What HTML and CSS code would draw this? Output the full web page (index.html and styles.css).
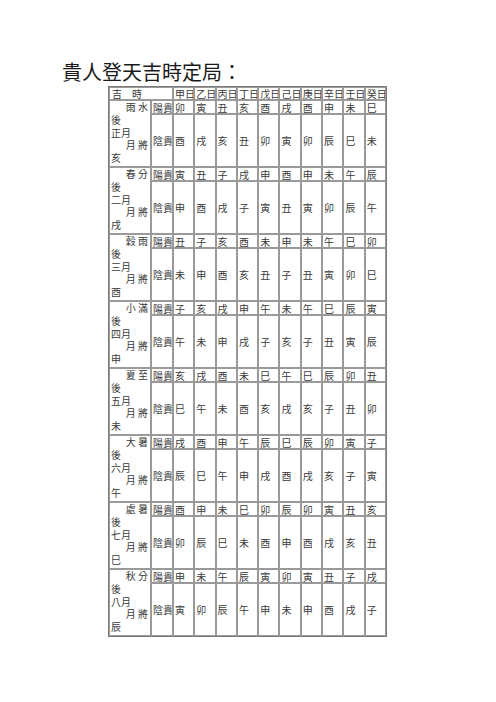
FILE: index.html
```html
<!DOCTYPE html>
<html lang="zh-Hant">
<head>
<meta charset="utf-8">
<title>貴人登天吉時定局</title>
<link rel="stylesheet" href="styles.css">
</head>
<body>
<h1 class="title">貴人登天吉時定局：</h1>
<table class="grid">
<colgroup>
<col class="c-label"><col class="c-kind">
<col class="c-day"><col class="c-day"><col class="c-day"><col class="c-day"><col class="c-day">
<col class="c-day"><col class="c-day"><col class="c-day"><col class="c-day"><col class="c-day">
</colgroup>
<tr class="head"><td colspan="2">吉　時</td><td>甲日</td><td>乙日</td><td>丙日</td><td>丁日</td><td>戊日</td><td>己日</td><td>庚日</td><td>辛日</td><td>壬日</td><td>癸日</td></tr>

<tr class="yang"><td rowspan="2" class="label"><div class="r">雨 水</div><div>後</div><div>正月</div><div class="r">月 將</div><div>亥</div></td><td>陽貴</td><td>卯</td><td>寅</td><td>丑</td><td>亥</td><td>酉</td><td>戌</td><td>酉</td><td>申</td><td>未</td><td>巳</td></tr>
<tr class="yin"><td>陰貴</td><td>酉</td><td>戌</td><td>亥</td><td>丑</td><td>卯</td><td>寅</td><td>卯</td><td>辰</td><td>巳</td><td>未</td></tr>

<tr class="yang"><td rowspan="2" class="label"><div class="r">春 分</div><div>後</div><div>二月</div><div class="r">月 將</div><div>戌</div></td><td>陽貴</td><td>寅</td><td>丑</td><td>子</td><td>戌</td><td>申</td><td>酉</td><td>申</td><td>未</td><td>午</td><td>辰</td></tr>
<tr class="yin"><td>陰貴</td><td>申</td><td>酉</td><td>戌</td><td>子</td><td>寅</td><td>丑</td><td>寅</td><td>卯</td><td>辰</td><td>午</td></tr>

<tr class="yang"><td rowspan="2" class="label"><div class="r">穀 雨</div><div>後</div><div>三月</div><div class="r">月 將</div><div>酉</div></td><td>陽貴</td><td>丑</td><td>子</td><td>亥</td><td>酉</td><td>未</td><td>申</td><td>未</td><td>午</td><td>巳</td><td>卯</td></tr>
<tr class="yin"><td>陰貴</td><td>未</td><td>申</td><td>酉</td><td>亥</td><td>丑</td><td>子</td><td>丑</td><td>寅</td><td>卯</td><td>巳</td></tr>

<tr class="yang"><td rowspan="2" class="label"><div class="r">小 滿</div><div>後</div><div>四月</div><div class="r">月 將</div><div>申</div></td><td>陽貴</td><td>子</td><td>亥</td><td>戌</td><td>申</td><td>午</td><td>未</td><td>午</td><td>巳</td><td>辰</td><td>寅</td></tr>
<tr class="yin"><td>陰貴</td><td>午</td><td>未</td><td>申</td><td>戌</td><td>子</td><td>亥</td><td>子</td><td>丑</td><td>寅</td><td>辰</td></tr>

<tr class="yang"><td rowspan="2" class="label"><div class="r">夏 至</div><div>後</div><div>五月</div><div class="r">月 將</div><div>未</div></td><td>陽貴</td><td>亥</td><td>戌</td><td>酉</td><td>未</td><td>巳</td><td>午</td><td>巳</td><td>辰</td><td>卯</td><td>丑</td></tr>
<tr class="yin"><td>陰貴</td><td>巳</td><td>午</td><td>未</td><td>酉</td><td>亥</td><td>戌</td><td>亥</td><td>子</td><td>丑</td><td>卯</td></tr>

<tr class="yang"><td rowspan="2" class="label"><div class="r">大 暑</div><div>後</div><div>六月</div><div class="r">月 將</div><div>午</div></td><td>陽貴</td><td>戌</td><td>酉</td><td>申</td><td>午</td><td>辰</td><td>巳</td><td>辰</td><td>卯</td><td>寅</td><td>子</td></tr>
<tr class="yin"><td>陰貴</td><td>辰</td><td>巳</td><td>午</td><td>申</td><td>戌</td><td>酉</td><td>戌</td><td>亥</td><td>子</td><td>寅</td></tr>

<tr class="yang"><td rowspan="2" class="label"><div class="r">處 暑</div><div>後</div><div>七月</div><div class="r">月 將</div><div>巳</div></td><td>陽貴</td><td>酉</td><td>申</td><td>未</td><td>巳</td><td>卯</td><td>辰</td><td>卯</td><td>寅</td><td>丑</td><td>亥</td></tr>
<tr class="yin"><td>陰貴</td><td>卯</td><td>辰</td><td>巳</td><td>未</td><td>酉</td><td>申</td><td>酉</td><td>戌</td><td>亥</td><td>丑</td></tr>

<tr class="yang"><td rowspan="2" class="label"><div class="r">秋 分</div><div>後</div><div>八月</div><div class="r">月 將</div><div>辰</div></td><td>陽貴</td><td>申</td><td>未</td><td>午</td><td>辰</td><td>寅</td><td>卯</td><td>寅</td><td>丑</td><td>子</td><td>戌</td></tr>
<tr class="yin"><td>陰貴</td><td>寅</td><td>卯</td><td>辰</td><td>午</td><td>申</td><td>未</td><td>申</td><td>酉</td><td>戌</td><td>子</td></tr>
</table>
</body>
</html>
```

FILE: styles.css
```css
html, body {
  margin: 0;
  padding: 0;
  background: #ffffff;
}

body {
  font-family: "Noto Sans CJK TC", "Noto Sans CJK JP", sans-serif;
  color: #222222;
  padding-top: 60px;
}

.title {
  margin: 0 0 2px 62px;
  font-size: 20px;
  line-height: 24px;
  font-weight: 400;
  color: #1a1a1a;
}

.grid {
  margin-left: 108px;
  width: 277px;
  table-layout: fixed;
  border-collapse: separate;
  border-spacing: 0;
  border: 1px solid #7a7a7a;
  font-size: 10px;
  color: #3a3a3a;
}

.c-label { width: 42px; }
.c-kind { width: 22px; }
.c-day { width: 21.3px; }

.grid td {
  border: 1px solid #9a9a9a;
  padding: 0 0 0 1px;
  line-height: 11px;
  white-space: nowrap;
  overflow: hidden;
  vertical-align: middle;
}

.grid .head td:first-child {
  padding-left: 2px;
}

.grid .yang {
  height: 14px;
}

.grid .yin {
  height: 53px;
}

.grid td.label {
  vertical-align: top;
  line-height: 12.8px;
  padding: 0 1px;
}

.label .r {
  text-align: right;
  padding-right: 1px;
}
```
